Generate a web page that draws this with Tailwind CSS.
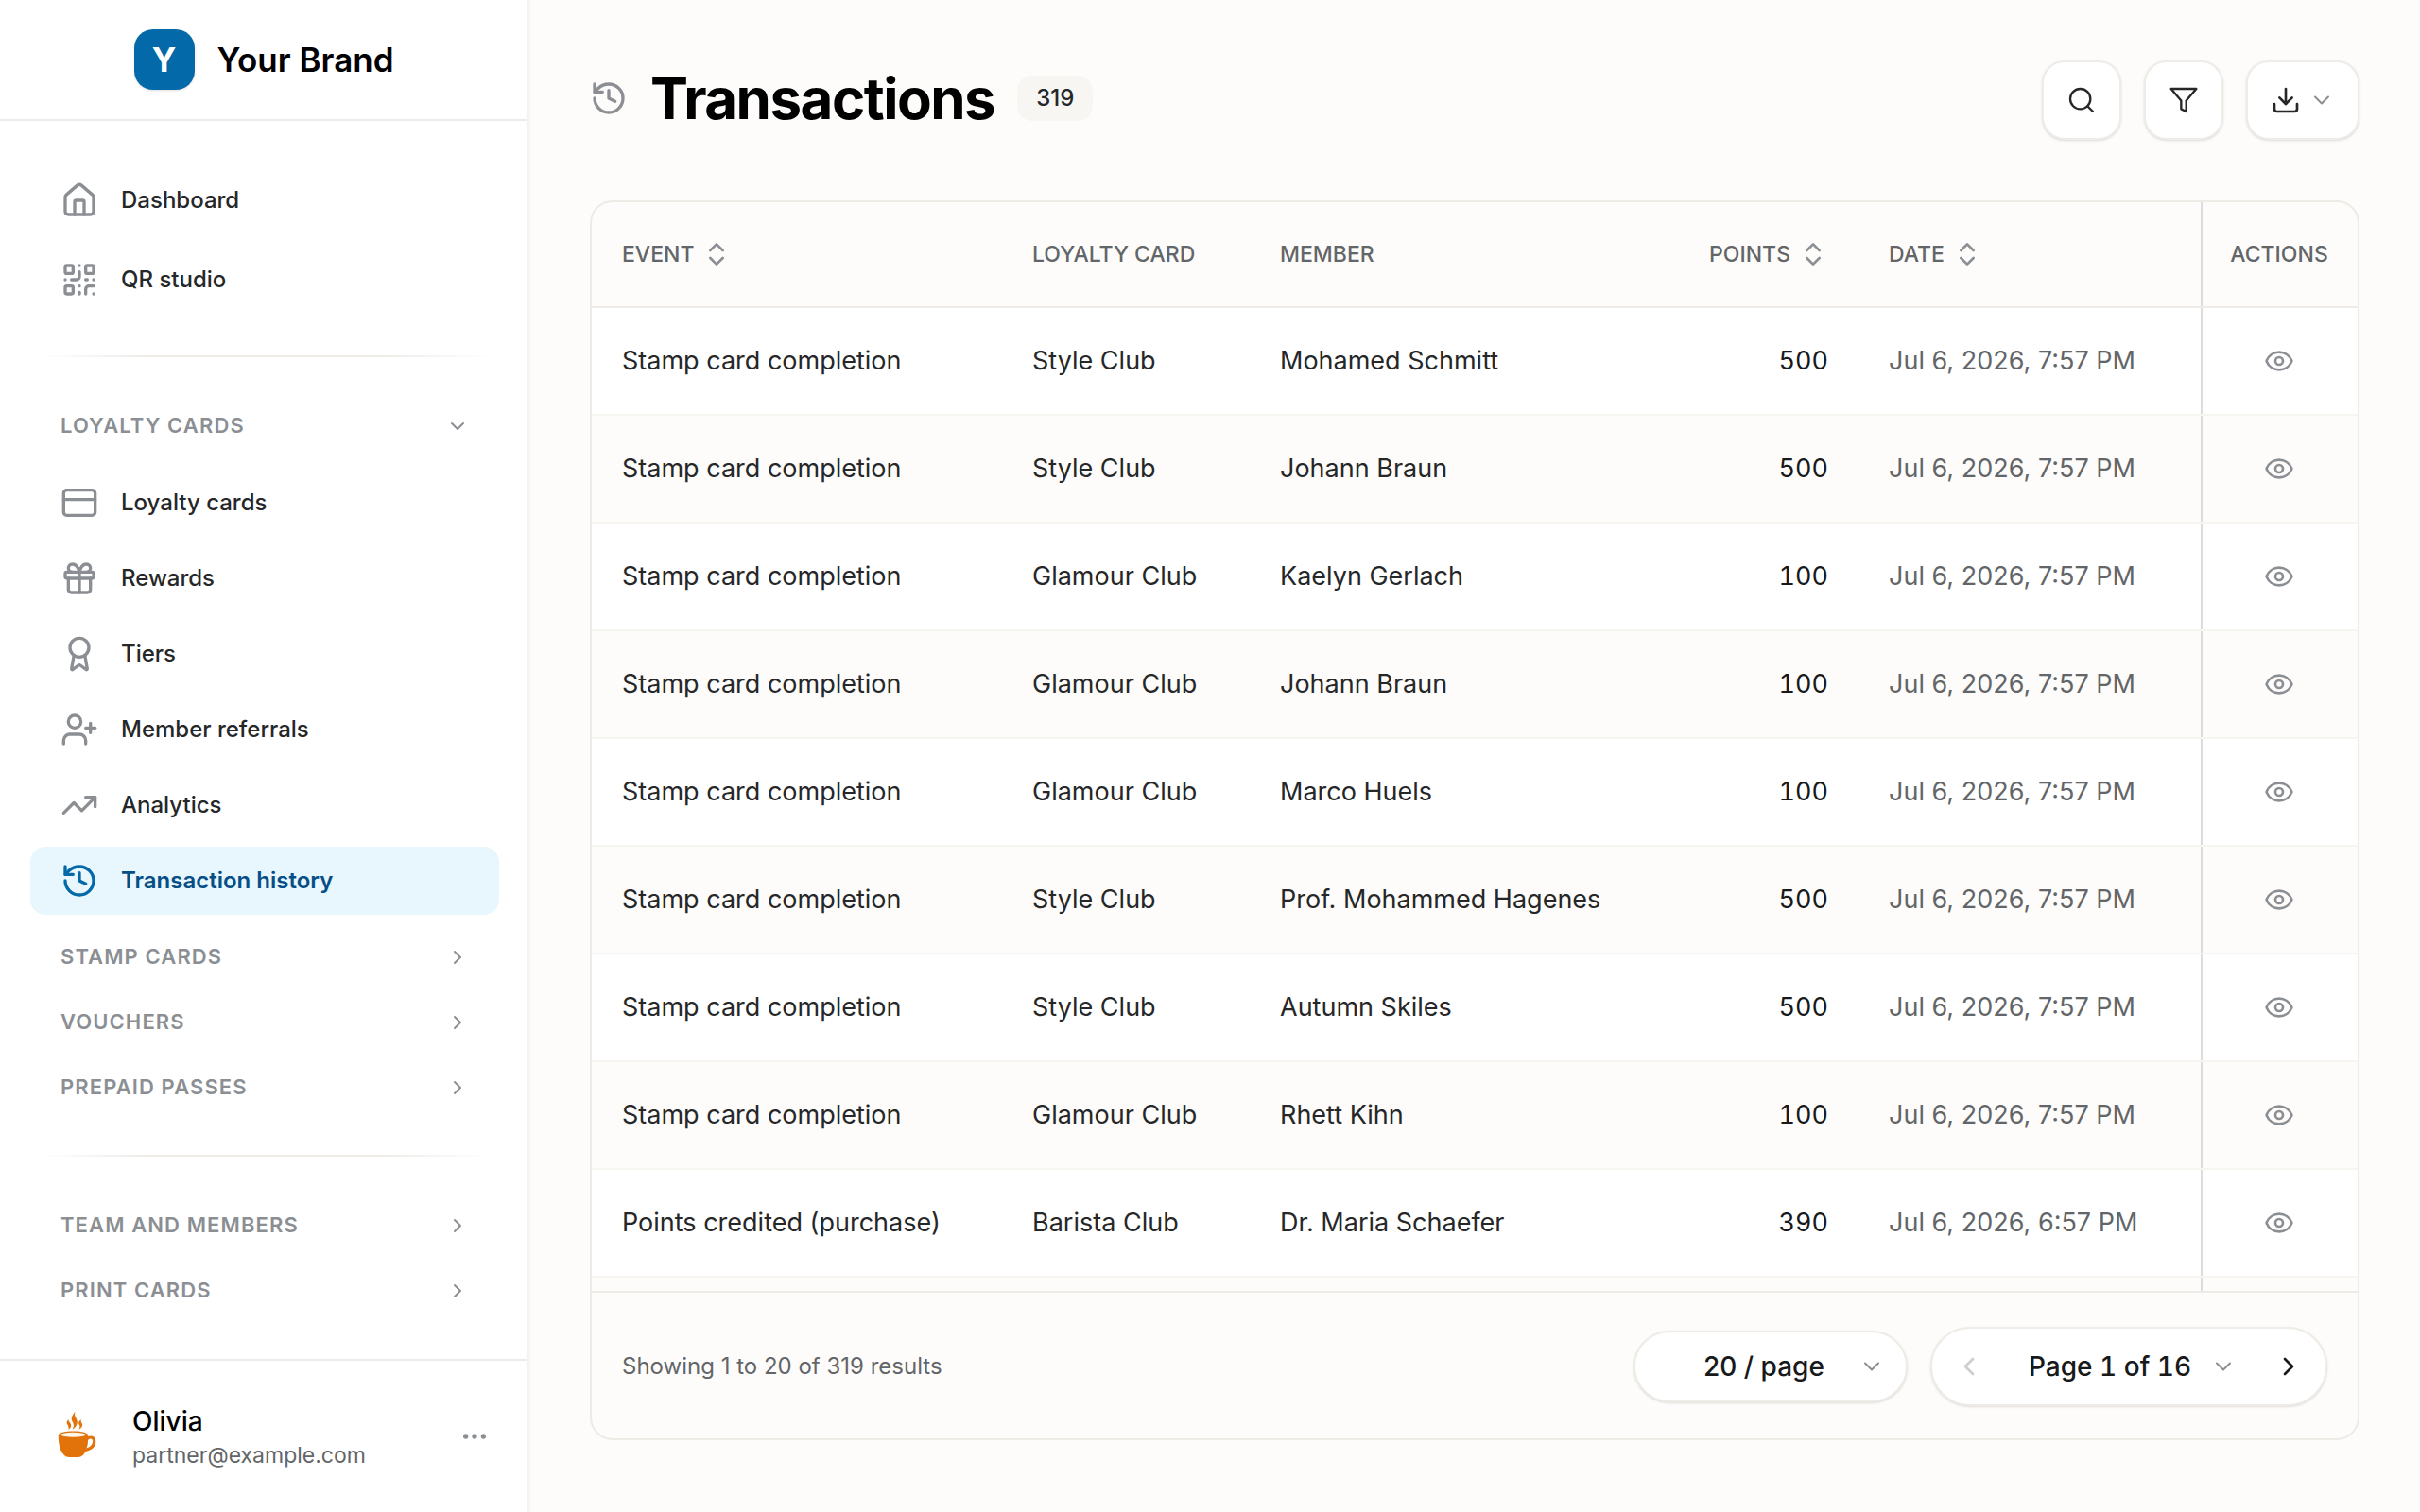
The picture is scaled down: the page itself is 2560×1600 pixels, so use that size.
<!DOCTYPE html>
<html lang="en">
  <head>
    <meta charset="UTF-8" />
    <meta name="viewport" content="width=device-width, initial-scale=1.0" />
    <title>Transactions</title>

    <script src="https://cdn.jsdelivr.net/npm/@tailwindcss/browser@4"></script>
  </head>
  <body class="bg-[#fdfcfa] font-['Inter',sans-serif] text-[#262728]">
    <!-- Icon sprite -->
    <svg class="hidden">
      <symbol id="i-home" viewBox="0 0 24 24"><path d="M15 21v-8a1 1 0 0 0-1-1h-4a1 1 0 0 0-1 1v8" /><path d="M3 10a2 2 0 0 1 .709-1.528l7-5.999a2 2 0 0 1 2.582 0l7 5.999A2 2 0 0 1 21 10v9a2 2 0 0 1-2 2H5a2 2 0 0 1-2-2z" /></symbol>
      <symbol id="i-qr" viewBox="0 0 24 24"><rect width="5" height="5" x="3" y="3" rx="1" /><rect width="5" height="5" x="16" y="3" rx="1" /><rect width="5" height="5" x="3" y="16" rx="1" /><path d="M21 16h-3a2 2 0 0 0-2 2v3" /><path d="M21 21v.01" /><path d="M12 7v3a2 2 0 0 1-2 2H7" /><path d="M3 12h.01" /><path d="M12 3h.01" /><path d="M12 16v.01" /><path d="M16 12h1" /><path d="M21 12v.01" /><path d="M12 21v-1" /></symbol>
      <symbol id="i-card" viewBox="0 0 24 24"><rect width="20" height="16" x="2" y="4" rx="2" /><path d="M2 10h20" /></symbol>
      <symbol id="i-gift" viewBox="0 0 24 24"><rect x="3" y="8" width="18" height="4" rx="1" /><path d="M12 8v13" /><path d="M19 12v7a2 2 0 0 1-2 2H7a2 2 0 0 1-2-2v-7" /><path d="M7.5 8a2.5 2.5 0 0 1 0-5A4.8 8 0 0 1 12 8a4.8 8 0 0 1 4.5-5 2.5 2.5 0 0 1 0 5" /></symbol>
      <symbol id="i-award" viewBox="0 0 24 24"><path d="m15.477 12.89 1.515 8.526a.5.5 0 0 1-.81.47l-3.58-2.687a1 1 0 0 0-1.197 0l-3.586 2.686a.5.5 0 0 1-.81-.469l1.514-8.526" /><circle cx="12" cy="8" r="6" /></symbol>
      <symbol id="i-user-plus" viewBox="0 0 24 24"><path d="M16 21v-2a4 4 0 0 0-4-4H6a4 4 0 0 0-4 4v2" /><circle cx="9" cy="7" r="4" /><path d="M19 8v6" /><path d="M22 11h-6" /></symbol>
      <symbol id="i-trend" viewBox="0 0 24 24"><path d="M16 7h6v6" /><path d="m22 7-8.5 8.5-5-5L2 17" /></symbol>
      <symbol id="i-history" viewBox="0 0 24 24"><path d="M3 12a9 9 0 1 0 9-9 9.75 9.75 0 0 0-6.74 2.74L3 8" /><path d="M3 3v5h5" /><path d="M12 7v5l4 2" /></symbol>
      <symbol id="i-down" viewBox="0 0 24 24"><path d="m6 9 6 6 6-6" /></symbol>
      <symbol id="i-right" viewBox="0 0 24 24"><path d="m9 18 6-6-6-6" /></symbol>
      <symbol id="i-left" viewBox="0 0 24 24"><path d="m15 18-6-6 6-6" /></symbol>
      <symbol id="i-dots" viewBox="0 0 24 24"><circle cx="12" cy="12" r="1" /><circle cx="19" cy="12" r="1" /><circle cx="5" cy="12" r="1" /></symbol>
      <symbol id="i-search" viewBox="0 0 24 24"><circle cx="11" cy="11" r="8" /><path d="m21 21-4.34-4.34" /></symbol>
      <symbol id="i-filter" viewBox="0 0 24 24"><path d="M22 3H2l8 9.46V19l4 2v-8.54L22 3z" /></symbol>
      <symbol id="i-download" viewBox="0 0 24 24"><path d="M21 15v4a2 2 0 0 1-2 2H5a2 2 0 0 1-2-2v-4" /><path d="m7 10 5 5 5-5" /><path d="M12 15V3" /></symbol>
      <symbol id="i-sort" viewBox="0 0 24 24"><path d="m7 15 5 5 5-5" /><path d="m7 9 5-5 5 5" /></symbol>
      <symbol id="i-eye" viewBox="0 0 24 24"><path d="M2.062 12.348a1 1 0 0 1 0-.696 10.75 10.75 0 0 1 19.876 0 1 1 0 0 1 0 .696 10.75 10.75 0 0 1-19.876 0" /><circle cx="12" cy="12" r="3" /></symbol>
    </svg>

    <div class="flex h-screen overflow-hidden">
      <!-- Sidebar -->
      <aside class="flex w-[560px] shrink-0 flex-col border-r-2 border-[#f3f3f3] bg-white shadow-[0_0_6px_rgba(0,0,0,0.04)]">
        <a href="#" class="flex h-32 shrink-0 items-center justify-center gap-6 border-b-2 border-[#eeebe7]">
          <span class="flex size-16 items-center justify-center rounded-[20px] bg-[#0369a8] text-[35px] font-bold text-white shadow-sm">Y</span>
          <span class="text-[35px] font-semibold text-black">Your Brand</span>
        </a>

        <nav class="flex-1 overflow-hidden pt-[46px] pr-[30px] pl-8">
          <div class="flex flex-col gap-2 text-2xl font-medium">
            <a href="#" class="flex h-[76px] items-center gap-6 px-8"><svg class="size-10 fill-none stroke-[#8b8f94] stroke-2 [stroke-linecap:round] [stroke-linejoin:round]"><use href="#i-home" /></svg>Dashboard</a>
            <a href="#" class="flex h-[76px] items-center gap-6 px-8"><svg class="size-10 fill-none stroke-[#8b8f94] stroke-2 [stroke-linecap:round] [stroke-linejoin:round]"><use href="#i-qr" /></svg>QR studio</a>
          </div>

          <div class="mx-2 mt-[42px] mb-[38px] h-[2px] bg-[linear-gradient(to_right,transparent,#eeebe7_25%,#eeebe7_75%,transparent)]"></div>

          <button class="flex h-[69px] w-full items-center justify-between px-8 text-[22px] font-semibold tracking-wider text-[#8b8f94]">LOYALTY CARDS <svg class="size-6 fill-none stroke-[#8b8f94] stroke-2 [stroke-linecap:round] [stroke-linejoin:round]"><use href="#i-down" /></svg></button>
          <div class="mt-[11px] mb-[10px] flex flex-col gap-2 text-2xl font-medium">
            <a href="#" class="flex h-[72px] items-center gap-6 px-8"><svg class="size-10 fill-none stroke-[#8b8f94] stroke-2 [stroke-linecap:round] [stroke-linejoin:round]"><use href="#i-card" /></svg>Loyalty cards</a>
            <a href="#" class="flex h-[72px] items-center gap-6 px-8"><svg class="size-10 fill-none stroke-[#8b8f94] stroke-2 [stroke-linecap:round] [stroke-linejoin:round]"><use href="#i-gift" /></svg>Rewards</a>
            <a href="#" class="flex h-[72px] items-center gap-6 px-8"><svg class="size-10 fill-none stroke-[#8b8f94] stroke-2 [stroke-linecap:round] [stroke-linejoin:round]"><use href="#i-award" /></svg>Tiers</a>
            <a href="#" class="flex h-[72px] items-center gap-6 px-8"><svg class="size-10 fill-none stroke-[#8b8f94] stroke-2 [stroke-linecap:round] [stroke-linejoin:round]"><use href="#i-user-plus" /></svg>Member referrals</a>
            <a href="#" class="flex h-[72px] items-center gap-6 px-8"><svg class="size-10 fill-none stroke-[#8b8f94] stroke-2 [stroke-linecap:round] [stroke-linejoin:round]"><use href="#i-trend" /></svg>Analytics</a>
            <a href="#" class="flex h-[72px] items-center gap-6 rounded-2xl bg-[#e8f6fe] px-8 font-semibold text-[#064f86]"><svg class="size-10 fill-none stroke-[#0369a8] stroke-2 [stroke-linecap:round] [stroke-linejoin:round]"><use href="#i-history" /></svg>Transaction history</a>
          </div>
          <button class="flex h-[69px] w-full items-center justify-between px-8 text-[22px] font-semibold tracking-wider text-[#8b8f94]">STAMP CARDS <svg class="size-6 fill-none stroke-[#8b8f94] stroke-2 [stroke-linecap:round] [stroke-linejoin:round]"><use href="#i-right" /></svg></button>
          <button class="flex h-[69px] w-full items-center justify-between px-8 text-[22px] font-semibold tracking-wider text-[#8b8f94]">VOUCHERS <svg class="size-6 fill-none stroke-[#8b8f94] stroke-2 [stroke-linecap:round] [stroke-linejoin:round]"><use href="#i-right" /></svg></button>
          <button class="flex h-[69px] w-full items-center justify-between px-8 text-[22px] font-semibold tracking-wider text-[#8b8f94]">PREPAID PASSES <svg class="size-6 fill-none stroke-[#8b8f94] stroke-2 [stroke-linecap:round] [stroke-linejoin:round]"><use href="#i-right" /></svg></button>

          <div class="mx-2 mt-[37px] mb-[38px] h-[2px] bg-[linear-gradient(to_right,transparent,#eeebe7_25%,#eeebe7_75%,transparent)]"></div>

          <button class="flex h-[69px] w-full items-center justify-between px-8 text-[22px] font-semibold tracking-wider text-[#8b8f94]">TEAM AND MEMBERS <svg class="size-6 fill-none stroke-[#8b8f94] stroke-2 [stroke-linecap:round] [stroke-linejoin:round]"><use href="#i-right" /></svg></button>
          <button class="flex h-[69px] w-full items-center justify-between px-8 text-[22px] font-semibold tracking-wider text-[#8b8f94]">PRINT CARDS <svg class="size-6 fill-none stroke-[#8b8f94] stroke-2 [stroke-linecap:round] [stroke-linejoin:round]"><use href="#i-right" /></svg></button>
        </nav>

        <!-- Account -->
        <div class="flex h-[162px] shrink-0 items-center border-t-2 border-[#eeebe7] px-10">
          <svg class="size-20 shrink-0" viewBox="0 0 80 80">
            <g fill="#e2720a">
              <path d="M21.7 39c0-2.500 6-4.500 15.800-4.500s15.800 2 15.800 4.500v1.200c4-1.700 8 .3 8 5.300 0 6-5 9.500-11 10.500-1 2.500-2.500 4.200-4.500 5.200-4 1.200-12 1.200-16 0-6-3.500-8.100-13.200-8.100-22.200z" />
              <path d="M39.500 14c-4 4.500-4.800 7.500-2.500 11 1.400 2.500 1.200 5-.5 7.700 4.500-2.700 6.500-7 4.500-11-1.800-3.200-2.500-4.700-1.500-7.700z" />
              <path d="M32.500 22c-2.500 2.500-2 4.200-.8 6 .8 1.500 1 3 .8 4.700 3.200-2 3.500-4.700 1.700-7-1.200-1.500-2-2.200-1.700-3.700z" />
              <path d="M46 22c-3.500 2.500-3.200 4.200-2 6 .8 1.500.6 3-.8 4.700 4-2 4.800-4.700 3.200-7-.9-1.500-1-2.200-.4-3.700z" />
            </g>
            <ellipse cx="37.500" cy="38.300" rx="13" ry="2.500" fill="#fdf6e9" />
            <path d="M53 44c2.500-2.500 5.500-1.500 5 2-.5 3.500-3.500 5.500-6.500 6.500 1-2.500 1.500-5 1.500-8.500z" fill="#fff" />
          </svg>
          <div class="mt-1 ml-5 flex-1">
            <div class="text-[28px] leading-9 font-medium text-black">Olivia</div>
            <div class="text-[23px] leading-9 text-[#636669]">partner@example.com</div>
          </div>
          <button aria-label="Account menu"><svg class="size-8 fill-[#8b8f94] stroke-[#8b8f94] stroke-2"><use href="#i-dots" /></svg></button>
        </div>
      </aside>

      <!-- Main -->
      <main class="flex min-w-0 flex-1 flex-col px-16 pt-16 pb-[76px]">
        <div class="flex shrink-0 items-start justify-between">
          <div class="flex h-20 items-center">
            <svg class="size-10 fill-none stroke-[#8b8f94] stroke-2 [stroke-linecap:round] [stroke-linejoin:round]"><use href="#i-history" /></svg>
            <h1 class="ml-6 text-6xl font-bold tracking-tight text-black">Transactions</h1>
            <span class="ml-6 flex h-12 items-center rounded-2xl bg-[#f7f6f3] px-5 text-2xl font-medium">319</span>
          </div>
          <div class="flex gap-6">
            <button aria-label="Search" class="flex size-[84px] items-center justify-center rounded-3xl border-2 border-[#efece8] bg-white shadow-sm"><svg class="size-8 fill-none stroke-[#262728] stroke-[1.75] [stroke-linecap:round] [stroke-linejoin:round]"><use href="#i-search" /></svg></button>
            <button aria-label="Filter" class="flex size-[84px] items-center justify-center rounded-3xl border-2 border-[#efece8] bg-white shadow-sm"><svg class="size-8 fill-none stroke-[#262728] stroke-[1.75] [stroke-linecap:round] [stroke-linejoin:round]"><use href="#i-filter" /></svg></button>
            <button aria-label="Export" class="flex h-[84px] w-[120px] items-center justify-center gap-2 rounded-3xl border-2 border-[#efece8] bg-white shadow-sm"><svg class="size-8 fill-none stroke-[#262728] stroke-2 [stroke-linecap:round] [stroke-linejoin:round]"><use href="#i-download" /></svg><svg class="size-7 fill-none stroke-[#8b8f94] stroke-[1.75] [stroke-linecap:round] [stroke-linejoin:round]"><use href="#i-down" /></svg></button>
          </div>
        </div>

        <div class="mt-16 flex min-h-0 flex-1 flex-col overflow-hidden rounded-3xl border-2 border-[#edebe6]">
          <div class="min-h-0 flex-1 overflow-hidden">
            <table class="w-full table-fixed border-separate border-spacing-0 text-left">
              <colgroup>
                <col class="w-[434px]" />
                <col class="w-[262px]" />
                <col />
                <col class="w-[200px]" />
                <col class="w-[362px]" />
                <col class="w-[166px]" />
              </colgroup>
              <thead class="text-[23px] text-[#636669]">
                <tr class="h-28">
                  <th class="border-b-2 border-[#efebe9] px-8 font-medium"><button class="flex items-center gap-2">EVENT <svg class="size-8 fill-none stroke-[#8b8f94] stroke-2 [stroke-linecap:round] [stroke-linejoin:round]"><use href="#i-sort" /></svg></button></th>
                  <th class="border-b-2 border-[#efebe9] px-8 font-medium">LOYALTY CARD</th>
                  <th class="border-b-2 border-[#efebe9] px-8 font-medium">MEMBER</th>
                  <th class="border-b-2 border-[#efebe9] px-8 font-medium"><button class="ml-auto flex items-center gap-2">POINTS <svg class="size-8 fill-none stroke-[#8b8f94] stroke-2 [stroke-linecap:round] [stroke-linejoin:round]"><use href="#i-sort" /></svg></button></th>
                  <th class="border-b-2 border-[#efebe9] px-8 font-medium"><button class="flex items-center gap-2">DATE <svg class="size-8 fill-none stroke-[#8b8f94] stroke-2 [stroke-linecap:round] [stroke-linejoin:round]"><use href="#i-sort" /></svg></button></th>
                  <th class="border-b-2 border-[#efebe9] text-center font-medium shadow-[inset_2px_0_0_#dddbdc]">ACTIONS</th>
                </tr>
              </thead>
              <tbody id="rows" class="text-[27px]"></tbody>
            </table>
          </div>

          <div class="flex h-[156px] shrink-0 items-center border-t-2 border-[#edebe6] px-8 pt-[2px]">
            <p class="text-2xl text-[#636669]">Showing 1 to 20 of 319 results</p>
            <div class="relative ml-auto">
              <select aria-label="Rows per page" class="h-[76px] w-[290px] appearance-none rounded-full border-2 border-[#efece8] bg-white pl-[72px] text-[28px] font-medium text-[#18191a] shadow-sm">
                <option>20 / page</option>
                <option>50 / page</option>
                <option>100 / page</option>
              </select>
              <svg class="pointer-events-none absolute top-6 right-6 size-7 fill-none stroke-[#8b8f94] stroke-[1.75] [stroke-linecap:round] [stroke-linejoin:round]"><use href="#i-down" /></svg>
            </div>
            <div class="ml-6 flex h-[84px] items-center rounded-full border-2 border-[#efece8] bg-white px-1 shadow-sm">
              <button aria-label="Previous page" disabled class="flex size-[70px] items-center justify-center"><svg class="size-8 fill-none stroke-[#cdced0] stroke-2 [stroke-linecap:round] [stroke-linejoin:round]"><use href="#i-left" /></svg></button>
              <div class="relative">
                <select aria-label="Page" class="h-[76px] w-[268px] appearance-none pl-7 text-[28px] font-medium text-[#18191a] tabular-nums">
                  <option>Page 1 of 16</option>
                  <option>Page 2 of 16</option>
                </select>
                <svg class="pointer-events-none absolute top-6 right-5 size-7 fill-none stroke-[#8b8f94] stroke-[1.75] [stroke-linecap:round] [stroke-linejoin:round]"><use href="#i-down" /></svg>
              </div>
              <button aria-label="Next page" class="flex size-[70px] items-center justify-center"><svg class="size-8 fill-none stroke-[#18191a] stroke-2 [stroke-linecap:round] [stroke-linejoin:round]"><use href="#i-right" /></svg></button>
            </div>
          </div>
        </div>
      </main>
    </div>

    <script>
      const transactions = [
        ["Stamp card completion", "Style Club", "Mohamed Schmitt", "500", "Jul 6, 2026, 7:57 PM"],
        ["Stamp card completion", "Style Club", "Johann Braun", "500", "Jul 6, 2026, 7:57 PM"],
        ["Stamp card completion", "Glamour Club", "Kaelyn Gerlach", "100", "Jul 6, 2026, 7:57 PM"],
        ["Stamp card completion", "Glamour Club", "Johann Braun", "100", "Jul 6, 2026, 7:57 PM"],
        ["Stamp card completion", "Glamour Club", "Marco Huels", "100", "Jul 6, 2026, 7:57 PM"],
        ["Stamp card completion", "Style Club", "Prof. Mohammed Hagenes", "500", "Jul 6, 2026, 7:57 PM"],
        ["Stamp card completion", "Style Club", "Autumn Skiles", "500", "Jul 6, 2026, 7:57 PM"],
        ["Stamp card completion", "Glamour Club", "Rhett Kihn", "100", "Jul 6, 2026, 7:57 PM"],
        ["Points credited (purchase)", "Barista Club", "Dr. Maria Schaefer", "390", "Jul 6, 2026, 6:57 PM"],
      ];

      const rows = document.getElementById("rows");
      rows.innerHTML = transactions
        .map(
          ([event, card, member, points, date]) => `
          <tr class="h-[114px] bg-white even:bg-[#fdfcfa]">
            <td class="border-b-2 border-[#f6f5f2] px-8">${event}</td>
            <td class="border-b-2 border-[#f6f5f2] px-8">${card}</td>
            <td class="border-b-2 border-[#f6f5f2] px-8">${member}</td>
            <td class="border-b-2 border-[#f6f5f2] px-8 text-right text-[#18191a] tabular-nums">${points}</td>
            <td class="border-b-2 border-[#f6f5f2] px-8 whitespace-nowrap text-[#636669]">${date}</td>
            <td class="border-b-2 border-[#f6f5f2] shadow-[inset_2px_0_0_#dddbdc]">
              <button aria-label="View" class="mx-auto flex"><svg class="size-8 fill-none stroke-[#8b8f94] stroke-2 [stroke-linecap:round] [stroke-linejoin:round]"><use href="#i-eye" /></svg></button>
            </td>
          </tr>`
        )
        .join("");
      // spare row under the last one keeps the column rule running down to the footer
      rows.innerHTML += `<tr class="h-[114px]"><td colspan="5"></td><td class="shadow-[inset_2px_0_0_#dddbdc]"></td></tr>`;
    </script>
  </body>
</html>
